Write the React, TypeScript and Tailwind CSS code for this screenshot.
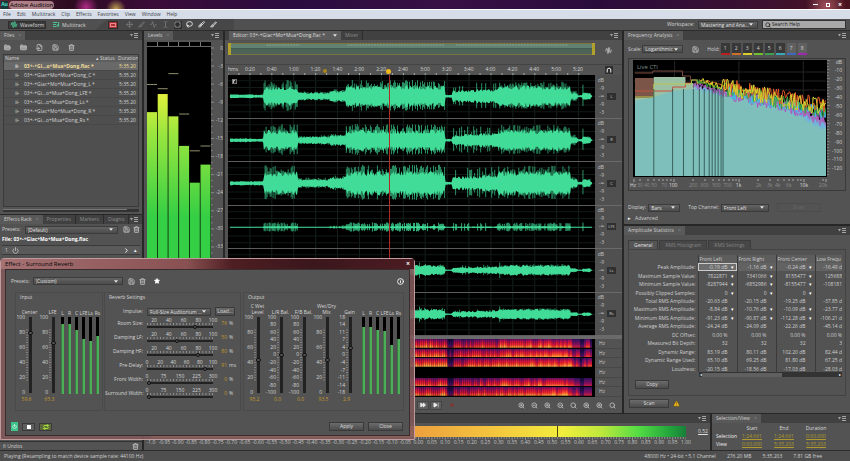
import { useState } from "react";
import type { ReactNode } from "react";
import {
  Activity, AudioWaveform, Brush, ChevronRight, FastForward, FileInput, FolderClosed, FolderOpen,
  Info, Lasso, ListMusic, Move, Power, Repeat, Save, Search, SkipForward, Slice, SquareDashed, Star, TextCursor, Trash2, TriangleAlert, ZoomIn, ZoomOut,
} from "lucide-react";
import type { LucideIcon } from "lucide-react";
import { clsx } from "clsx";

const CHANNELS = ["L", "R", "C", "LFE", "Ls", "Rs"];
const MENUS = ["File", "Edit", "Multitrack", "Clip", "Effects", "Favorites", "View", "Window", "Help"];
const FILES = [
  "03+-+Gi...o+Mua+Dong.flac *",
  "03+-+Giac+Mo+Mua+Dong_C *",
  "03+-+Giac+Mo+Mua+Dong_L *",
  "03+-+Gi...o+Mua+Dong_LFE *",
  "03+-+Gi...o+Mua+Dong_Ls *",
  "03+-+Giac+Mo+Mua+Dong_R *",
  "03+-+Gi...o+Mua+Dong_Rs *",
];
const TIMES = ["0:20", "0:40", "1:00", "1:20", "1:40", "2:00", "2:20", "2:40", "3:00", "3:20", "3:40", "4:00", "4:20", "4:40", "5:00", "5:20"];
const STATS: string[][] = [
  ["Peak Amplitude:", "-0.19 dB", "-1.16 dB", "-0.24 dB", "-16.49 d", "v"],
  ["Maximum Sample Value:", "7822871", "7341066", "8155477", "125688", "v"],
  ["Minimum Sample Value:", "-8287944", "-6852986", "-8155477", "-108181", "v"],
  ["Possibly Clipped Samples:", "0", "0", "0", "", "v"],
  ["Total RMS Amplitude:", "-20.63 dB", "-20.15 dB", "-19.25 dB", "-37.85 d", ""],
  ["Maximum RMS Amplitude:", "-8.84 dB", "-10.76 dB", "-10.09 dB", "-23.77 d", "v"],
  ["Minimum RMS Amplitude:", "-91.23 dB", "-90.87 dB", "-112.28 dB", "-106.21 d", "v"],
  ["Average RMS Amplitude:", "-24.24 dB", "-24.09 dB", "-22.26 dB", "-45.14 d", ""],
  ["DC Offset:", "0.00 %", "0.00 %", "0.00 %", "0.00 %", ""],
  ["Measured Bit Depth:", "32", "32", "32", "3", ""],
  ["Dynamic Range:", "83.19 dB", "80.11 dB", "102.20 dB", "82.44 d", ""],
  ["Dynamic Range Used:", "65.10 dB", "69.25 dB", "81.80 dB", "67.25 d", ""],
  ["Loudness:", "-20.15 dB", "-18.56 dB", "-17.03 dB", "-28.03 d", ""],
];
// Label and place on the 194 units of the frequency axis.
const FREQUENCIES: [string, number][] = [
  ["Hz", 1], ["30", 8], ["40", 15], ["50", 22], ["70", 32], ["100", 41], ["200", 61], ["300", 72], ["500", 84], ["700", 95],
  ["1k", 106], ["2k", 126], ["3k", 137], ["4k", 145], ["6k", 156], ["10k", 171], ["20k", 190],
];

// Repeatable noise, so that every render draws the same signal.
function noise(seed: number) {
  let s = seed * 7919 + 17;
  return () => {
    s = (s * 1103515245 + 12345) % 2147483648;
    return s / 2147483648;
  };
}

// Loudness of the song at x (0..366): [body, peak].
function envelope(x: number): [number, number] {
  if (x < 36) return [1.5, 3];
  if (x < 70) return [8, 16];
  if (x < 102) return [3, 5];
  if (x < 118) return [4.5, 7];
  if (x < 217) return [8.5, 16];
  if (x < 224) return [1, 1.5];
  if (x < 270) return [4.5 + (x - 224) / 25, 14];
  if (x < 342) return [8.5, 15];
  if (x < 349) return [3, 6];
  if (x < 354) return [1, 1.5];
  if (x < 362) return [3, 4];
  return [1, 1];
}

interface TabProps { label: string; active?: boolean; close?: boolean; }

function Tab({ label, active, close }: TabProps) {
  return (
    <button className={clsx("flex h-full items-center gap-1 whitespace-nowrap px-1", active ? "bg-[#595959] text-[#cfcfcf]" : "border-r border-[#2c2c2c] bg-[#404040] text-[#8b8b8b]")}>
      {label}
      {close && <span className="text-[#8d8d8d]">×</span>}
    </button>
  );
}

function TabBar({ children }: { children: ReactNode }) {
  return (
    <div className="flex h-[9px] shrink-0 items-stretch bg-[#414141]">
      {children}
      <button aria-label="Panel menu" className="ml-auto mr-1 flex items-center gap-px text-[#a5a5a5]">
        <svg viewBox="0 0 8 5" className="h-[5px] w-2" fill="currentColor"><path d="M0 1h3L1.500 3.500zM4 0h4v1H4zM4 2h4v1H4zM4 4h4v1H4z" /></svg>
      </button>
    </div>
  );
}

function Caret() {
  return <svg viewBox="0 0 5 3" className="pointer-events-none h-[3px] w-[4px] shrink-0" fill="#e4e4e4"><path d="M0 0h5L2.500 3z" /></svg>;
}

function Dropdown({ label, value, className }: { label: string; value: string; className: string }) {
  return (
    <div className={clsx("flex h-2 items-center border border-[#3b3b3b] bg-gradient-to-b from-[#646464] to-[#4b4b4b] pr-1", className)}>
      <select aria-label={label} className="min-w-0 flex-1 appearance-none truncate bg-transparent pl-[2px] leading-[6px] text-[#e0e0e0] outline-none">
        <option>{value}</option>
      </select>
      <Caret />
    </div>
  );
}

function IconButton({ icon: Icon, label, className }: { icon: LucideIcon; label: string; className?: string }) {
  return (
    <button aria-label={label} title={label} className={clsx("grid h-2 w-2 shrink-0 place-items-center text-[#b9b9b9]", className)}>
      <Icon className="h-[7px] w-[7px]" strokeWidth={3} />
    </button>
  );
}

function PushButton({ children, className }: { children: ReactNode; className?: string }) {
  return (
    <button className={clsx("h-[9px] border border-[#3a3a3a] bg-gradient-to-b from-[#6c6c6c] to-[#4c4c4c] leading-[7px] text-[#dedede]", className)}>{children}</button>
  );
}

// Labels spread so that the middle of each one lies on its mark.
function ScaleX({ labels, className }: { labels: string[]; className?: string }) {
  return (
    <div className={clsx("flex justify-between", className)}>
      {labels.map((l, i) => <span key={i} className="flex w-0 justify-center whitespace-pre">{l}</span>)}
    </div>
  );
}

function ScaleY({ labels, className }: { labels: string[]; className?: string }) {
  return (
    <div className={clsx("flex flex-col justify-between", className)}>
      {labels.map((l, i) => <span key={i} className="flex h-0 items-center justify-end whitespace-nowrap">{l}</span>)}
    </div>
  );
}

function TitleBar() {
  return (
    <header className="flex h-[9px] shrink-0 items-center bg-[radial-gradient(circle_at_86px_7px,#b02a86_0,#b02a8600_12px),radial-gradient(circle_at_116px_9px,#c0a050_0,#a8884400_10px),radial-gradient(circle_at_826px_6px,#a0505a_0,#a0505a00_20px),linear-gradient(90deg,#5a2a38,#2c0a20_8%,#3a0c38_18%,#2a0c40_35%,#381045_52%,#2a0c3c_70%,#3c1030_90%,#48141e)]">
      <span className="ml-px grid h-2 w-[7px] place-items-center bg-[#123c3c] text-[5px] font-bold text-[#5fe0cc]">Au</span>
      <span className="ml-px rounded bg-[#d9a9ae]/70 px-px text-[6px] leading-[8px] text-black">Adobe Audition</span>
      <div className="ml-auto flex items-center gap-2 pr-2 text-white">
        <button aria-label="Minimize" className="h-px w-[5px] bg-white" />
        <button aria-label="Restore" className="h-1 w-1 border border-white" />
        <button aria-label="Close" className="text-[7px] font-bold leading-[8px]">×</button>
      </div>
    </header>
  );
}

function Toolbar() {
  const tools: [LucideIcon, string][] = [[Move, "Move"], [Slice, "Razor"], [Activity, "Slip"], [TextCursor, "Time selection"]];
  const brushes: [LucideIcon, string][] = [[SquareDashed, "Marquee"], [Lasso, "Lasso"], [Brush, "Paintbrush"], [Slice, "Healing"]];
  return (
    <div className="flex h-3 shrink-0 items-center border-b border-[#2c2c2c] bg-[#505050] text-[#d8d8d8]">
      <button className="ml-2 flex h-2 items-center gap-[2px] border border-[#2f2f2f] bg-[#3b3b3b] px-px leading-[6px]">
        <AudioWaveform className="h-[7px] w-2 text-[#4bd39b]" strokeWidth={3} />Waveform
      </button>
      <button className="ml-[5px] flex h-2 items-center gap-[2px] px-px leading-[6px]">
        <ListMusic className="h-[7px] w-2 text-[#4bd39b]" strokeWidth={3} />Multitrack
      </button>
      <div className="ml-[9px] h-full w-3 bg-[#474747] [clip-path:polygon(100%_0,100%_100%,0_100%)]" />
      <div className="flex h-full items-center gap-1 bg-[#474747] pr-4">
        <button aria-label="Spectral display" className="grid h-2 w-[10px] place-items-center border border-[#2b2b2b] bg-[#a8343a]">
          <span className="h-1 w-[6px] border border-[#e88]" />
        </button>
        <div className="ml-1 flex gap-1 opacity-40">{tools.map(([icon, label]) => <IconButton key={label} icon={icon} label={label} />)}</div>
        <div className="flex gap-1">
          {brushes.map(([icon, label], i) => <IconButton key={label} icon={icon} label={label} className={i === 0 ? "bg-[#2e2e2e]" : "text-[#e6e6e6]"} />)}
        </div>
      </div>
      <span className="ml-auto mr-1">Workspace:</span>
      <Dropdown label="Workspace" value="Mastering and Anal..." className="w-[60px]" />
      <div className="ml-1 mr-1 flex h-[9px] w-[84px] items-center border border-[#333] bg-[#a9a9a9] px-px">
        <Search className="h-[6px] w-2 text-[#222]" strokeWidth={3} />
        <input aria-label="Search help" placeholder="Search Help" className="min-w-0 flex-1 bg-transparent leading-[7px] outline-none placeholder:text-[#1d1d1d]" />
      </div>
    </div>
  );
}

function FilesPanel() {
  const [selected, setSelected] = useState(0);
  return (
    <section className="flex h-[183px] shrink-0 flex-col bg-[#535353]">
      <TabBar><Tab label="Files" active close /></TabBar>
      <div className="flex h-[14px] items-center gap-1 px-[3px]">
        <IconButton icon={FolderOpen} label="Open file" className="[&_svg]:fill-[#999]" />
        <IconButton icon={FolderClosed} label="Import" className="ml-1 [&_svg]:fill-[#999]" />
        <IconButton icon={FileInput} label="New file" className="ml-1" />
        <IconButton icon={Save} label="Insert into multitrack" className="ml-1" />
        <IconButton icon={Trash2} label="Close file" className="ml-1" />
      </div>
      <div className="mx-[3px] flex-1 overflow-hidden border border-[#3a3a3a] bg-[#4f4f4f]">
        <table className="w-full table-fixed border-collapse text-left text-[#d2d2d2]">
          <colgroup><col /><col className="w-[18px]" /><col className="w-[20px]" /></colgroup>
          <thead>
            <tr className="h-[7px] bg-[#5e5e5e] leading-[7px]">
              <th className="p-0 pl-px font-normal">Name<span className="float-right mr-px">▴</span></th>
              <th className="p-0 font-normal">Status</th>
              <th className="p-0 font-normal">Duration</th>
            </tr>
          </thead>
          <tbody>
            {FILES.map((f, i) => (
              <tr key={f} onClick={() => setSelected(i)} className={clsx("h-[8px] border-b border-[#484848] leading-[8px]", i === selected ? "bg-[#696969] font-bold text-[#f0dc98]" : "font-medium")}>
                <td className="whitespace-nowrap p-0 pl-[11px]"><span className="inline-block w-[9px] text-[#c8c8c8]">⊪</span>{f}</td>
                <td className="p-0" />
                <td className="overflow-hidden whitespace-nowrap p-0 pl-px font-medium">5:35.20</td>
              </tr>
            ))}
          </tbody>
        </table>
      </div>
      <div className="mx-[3px] my-[2px] h-[3px] bg-[#333]"><div className="h-px w-[124px] bg-[#777]" /></div>
    </section>
  );
}

function EffectsRack() {
  return (
    <section className="flex min-h-0 flex-1 flex-col bg-[#535353]">
      <TabBar>
        <Tab label="Effects Rack" active close />
        <Tab label="Properties" /><Tab label="Markers" /><Tab label="Diagno" />
      </TabBar>
      <div className="flex h-[11px] items-center px-[2px] text-[#d6d6d6]">
        <span>Presets:</span>
        <Dropdown label="Rack preset" value="(Default)" className="ml-1 w-[94px]" />
        <IconButton icon={Save} label="Save preset" className="ml-1" />
        <IconButton icon={Trash2} label="Delete preset" className="ml-[2px]" />
      </div>
      <div className="h-[10px] truncate px-[2px] font-bold leading-[8px] text-white">File: 03+-+Giac+Mo+Mua+Dong.flac</div>
      <div className="mx-[2px] flex h-[10px] items-center gap-1 border-y border-[#3a3a3a] bg-[#5a5a5a] px-[3px]">
        <span>1</span>
        <IconButton icon={Power} label="Toggle effect 1" />
        <IconButton icon={ChevronRight} label="Choose effect" className="ml-auto text-white" />
        <span className="text-white">▴</span>
      </div>
      <div className="mt-auto flex h-[9px] items-center justify-between border-t border-[#333] px-[3px]">
        <span>6 Undos</span>
        <IconButton icon={Trash2} label="Clear history" />
      </div>
    </section>
  );
}

function LevelsPanel() {
  // top of each bar and of its held peak, in dB below full scale
  const bars = [[10.8, 6.300], [7.800, 7], [11.5, 4.500], [16.400, 11.200], [22.500, 17.300], [19.500, 16.500]];
  const db = Array.from({ length: 13 }, (_, i) => String(-3 * i));
  return (
    <section className="flex w-[79px] shrink-0 flex-col bg-[#535353]">
      <TabBar><Tab label="Levels" active close /></TabBar>
      <div className="flex min-h-0 flex-1 overflow-hidden pl-[3px] pt-[2px]">
        <div className="flex w-16 flex-col bg-black">
          <div className="flex h-[5px] divide-x divide-[#777] border-b border-[#666]">{CHANNELS.map((c) => <div key={c} className="flex-1" />)}</div>
          <svg viewBox="0 0 64 366" className="h-[366px] w-16 shrink-0">
            <defs>
              <linearGradient id="lvl" gradientUnits="userSpaceOnUse" x1="0" y1="40" x2="0" y2="170">
                <stop offset="0" stopColor="#eef23c" /><stop offset=".35" stopColor="#9be63e" /><stop offset="1" stopColor="#35cf45" />
              </linearGradient>
            </defs>
            {bars.map(([top, peak], i) => (
              <g key={i}>
                <rect x={i * 10.7} y={top * 6.030} width="10" height="366" fill="url(#lvl)" />
                <rect x={i * 10.7} y={peak * 6.030 - 1} width="10" height="1" fill="#8f8f6c" />
              </g>
            ))}
          </svg>
        </div>
        <svg viewBox="0 0 3 366" className="h-[366px] w-[3px] shrink-0"><path d={Array.from({ length: 60 }, (_, i) => `M0 ${6 + i * 6.030}H${i % 3 ? 1.5 : 3}`).join("")} stroke="#999" strokeWidth=".8" /></svg>
        <ScaleY labels={db} className="mt-[6px] h-[217px] w-[9px] text-[#c8c8c8]" />
      </div>
    </section>
  );
}

function Waveform({ index }: { index: number }) {
  const rnd = noise(index + 3);
  const gain = [1, 1, 1.15, 0.4, 0.5, 0.5][index];
  const lfe = index === 3;
  const top: string[] = [];
  const bottom: string[] = [];
  const spikes: string[] = [];
  for (let x = 2; x < 364; x += 1) {
    const [body, peak] = envelope(x);
    const b = Math.max(0.5, body * (lfe ? 0.12 : gain) * (0.75 + rnd() * 0.6));
    top.push(`${x},${(22 - b).toFixed(1)}`);
    bottom.unshift(`${x},${(22 + b).toFixed(1)}`);
    const chance = x >= 224 && x < 270 ? 0.2 : 0.7;
    if (rnd() < chance && x > 34 && (!lfe || peak > 6)) {
      const p = peak * gain * (0.6 + rnd() * 0.45) * (lfe ? 0.75 : index > 3 ? 0.8 : 1);
      spikes.push(`M${x} ${(22 - p).toFixed(1)}V${(22 + p * 0.9).toFixed(1)}`);
    }
  }
  if (index < 4) spikes.push(`M325 ${22 - 12 * gain}V${22 + 10 * gain}M354 ${22 - 12 * gain}V${22 + 10 * gain}`);
  if (index > 3) spikes.push("M191 14V30M271 14V30");
  return (
    <svg viewBox="0 0 366 44" preserveAspectRatio="none" className="min-h-0 w-full flex-1 border-b border-[#5c5c5c] bg-black">
      <path d={TIMES.map((_, i) => `M${(i + 1) * 21.850} 0V44`).join("")} stroke="#14201c" strokeWidth="1" />
      <path d="M0 6H366M0 13H366M0 22H366M0 31H366M0 38H366" stroke="#101a16" strokeWidth="1" />
      <path d={spikes.join("")} stroke="#40d996" strokeWidth=".9" opacity={lfe ? 0.9 : 0.75} />
      <polygon points={[...top, ...bottom].join(" ")} fill="#41dc98" />
    </svg>
  );
}

function Spectrogram({ index }: { index: number }) {
  const rnd = noise(index + 40);
  const gain = index === 1 || index === 2 ? 1 : 0.75;
  const cols = Array.from({ length: 181 }, (_, i) => {
    const [body] = envelope(i * 2);
    const v = body * gain * (0.55 + rnd() * 0.8);
    return { x: i * 2 + 1, kind: v > 8 ? "peak" : v > 5.200 ? "hot" : v > 2.800 ? "warm" : v > 1.300 ? "cool" : "dark" };
  });
  return (
    <svg viewBox="0 0 366 9" preserveAspectRatio="none" className="min-h-0 w-full flex-1 border-b border-black bg-black">
      {index !== 3 && cols.map((c) => <rect key={c.x} x={c.x} y="0" width="2" height="9" fill={`url(#${c.kind})`} />)}
    </svg>
  );
}

function SpectrumGradients() {
  const ramps: [string, string[]][] = [
    ["peak", ["#7c1264", "#e0183c", "#ff5a28", "#ffc850"]],
    ["hot", ["#641068", "#cc1040", "#f02a2c", "#ffa040"]],
    ["warm", ["#4a1068", "#980e54", "#d01438", "#f85a2c"]],
    ["cool", ["#2c105c", "#5c1060", "#8c1058", "#d02840"]],
    ["dark", ["#140a30", "#200c4a", "#3a1058", "#701050"]],
  ];
  return (
    <svg className="absolute h-0 w-0" aria-hidden="true">
      <defs>
        {ramps.map(([id, stops]) => (
          <linearGradient key={id} id={id} x1="0" y1="0" x2="0" y2="1">
            {stops.map((s, i) => <stop key={i} offset={i / 3} stopColor={s} />)}
          </linearGradient>
        ))}
      </defs>
    </svg>
  );
}

function EditorPanel() {
  const zooms: [LucideIcon, string][] = [
    [ZoomIn, "Zoom in"], [ZoomOut, "Zoom out"], [ZoomIn, "Zoom in vertically"], [ZoomOut, "Zoom out vertically"],
    [Search, "Zoom full"], [ZoomIn, "Zoom to in point"], [ZoomIn, "Zoom to out point"], [Search, "Zoom to selection"],
  ];
  return (
    <section className="flex min-w-0 flex-1 flex-col bg-[#535353]">
      <TabBar>
        <div className="w-1" />
        <button className="flex items-center gap-2 bg-[#5c5c5c] px-1 text-[#dcdcdc]">Editor: 03+-+Giac+Mo+Mua+Dong.flac *<Caret /></button>
        <Tab label="Mixer" />
      </TabBar>
      <div className="flex h-6 items-start pl-[3px] pt-[3px]">
        <div className="flex h-3 min-w-0 flex-1 border-x-[3px] border-[#b3a02c] bg-[#4d6358]">
          <svg viewBox="0 0 366 12" preserveAspectRatio="none" className="h-full w-full">
            <rect width="366" height="5" fill="#638171" />
            <path d="M36 2H70M118 2H217M228 2H342" stroke="#83a694" strokeDasharray="2 1" />
            <path d="M0 5.500H366" stroke="#455a50" />
            <path d="M0 .5H366M0 11.500H366" stroke="#7a7440" />
          </svg>
        </div>
        <div className="flex w-[27px] justify-center pt-[3px]"><IconButton icon={AudioWaveform} label="Zoom navigator" /></div>
      </div>
      <div className="flex h-[11px] items-center border-t border-[#444] pl-[3px]">
        <div className="relative flex h-full min-w-0 flex-1 flex-col justify-between text-[#d5d5d5]">
          <ScaleX labels={["\u2003\u2003hms", ...TIMES, ""]} className="-mr-[5px] leading-[8px]" />
          <svg viewBox="0 0 366 2" preserveAspectRatio="none" className="h-[2px] w-full">
            <path d={Array.from({ length: 33 }, (_, i) => `M${i * 10.930} 0V2`).join("")} stroke="#aaa" />
          </svg>
          <span className="absolute left-[26%] top-1 h-1 w-1 rounded-full bg-[#a8861a]" />
          <span className="absolute left-[43%] top-1 h-[5px] w-[5px] rounded-full bg-[#f0b81c]" />
        </div>
        <div className="flex w-[27px] justify-center">
          <button aria-label="Snapping" className="grid h-2 w-2 place-items-center bg-[#2f2f2f]">
            <svg viewBox="0 0 6 6" className="h-[6px] w-[6px]" fill="none" stroke="#f2f2f2"><path d="M1.200 5.500V3a1.800 1.800 0 0 1 3.600 0v2.500" /></svg>
          </button>
        </div>
      </div>
      <div className="flex min-h-0 flex-1 pl-[3px]">
        <div className="relative flex min-w-0 flex-1 flex-col bg-black">
          {CHANNELS.map((c, i) => <Waveform key={c} index={i} />)}
          <div className="absolute inset-y-0 left-[44%] w-px bg-[#b02a2a]" />
          <span className="absolute left-1 top-1 h-[5px] w-[5px] border border-[#777] bg-[linear-gradient(135deg,#bbb_50%,#222_50%)]" />
        </div>
        <div className="flex w-[27px] flex-col">
          {CHANNELS.map((c) => (
            <div key={c} className="flex flex-1 items-center border-b border-[#6a6a6a] bg-[#505050]">
              <ScaleY labels={["dB", "-9", "-∞", "-9", "-3"]} className="h-8 w-[9px] text-[#c4c4c4]" />
              <button className="ml-[3px] h-[7px] w-[9px] bg-[#303030] text-[4px] leading-[7px] text-[#ccc]">{c}</button>
            </div>
          ))}
        </div>
      </div>
      <div className="h-[3px] bg-[#6a6a6a]" />
      <div className="flex h-[58px] pl-[3px]">
        <SpectrumGradients />
        <div className="flex min-w-0 flex-1 flex-col">{CHANNELS.map((c, i) => <Spectrogram key={c} index={i} />)}</div>
        <div className="flex w-[27px] flex-col">
          {CHANNELS.map((c) => <span key={c} className="flex flex-1 items-center border-b border-[#474747] pl-1 text-[#c8c8c8]">Hz</span>)}
        </div>
      </div>
      <div className="flex h-4 items-center pr-[6px]">
        <div className="w-[49%] shrink-0" />
        <button aria-label="Fast forward" className="mr-px grid h-[9px] w-3 place-items-center border border-[#444] bg-[#5e5e5e]"><FastForward className="h-[6px] w-2 fill-[#eee] text-[#eee]" /></button>
        <button aria-label="Skip to end" className="grid h-[9px] w-3 place-items-center border border-[#444] bg-[#5e5e5e]"><SkipForward className="h-[6px] w-2 fill-[#eee] text-[#eee]" /></button>
        <button aria-label="Record" className="ml-2 mr-auto h-1 w-1 rounded-full bg-[#7a3a3a]" />
        <div className="flex gap-[5px]">{zooms.map(([icon, label]) => <IconButton key={label} icon={icon} label={label} />)}</div>
      </div>
    </section>
  );
}

function FrequencyPlot() {
  const rnd = noise(9);
  // falling curve shared by all the traces
  const base = (x: number) => (x < 90 ? 19 + Math.max(0, x - 66) * 0.25 : 25 + (x - 90) * 0.2);
  const trace = (off: number, jump: number, from = 60) => {
    const p: string[] = [];
    for (let x = from; x <= 194; x += 1) {
      const amp = x < 90 ? jump * 0.35 : jump;
      p.push(`${x},${Math.max(12, base(x) + off * Math.min(1, x / 120) + (rnd() - 0.5) * amp).toFixed(1)}`);
    }
    return p.join(" ");
  };
  const edge = (from: number, start: number, slope: number, jump: number) => {
    const p: string[] = [];
    for (let x = from; x <= 194; x += 1) p.push(`${x},${(start + (x - from) * slope + (x > 150 ? (x - 150) * 0.3 : 0) + (rnd() - 0.5) * jump).toFixed(1)}`);
    return p.join(" ");
  };
  const lines = [20, 39, 50, 60, 66, 71, 76, 79, 82, 85, 88, 90];
  return (
    <svg viewBox="0 0 194 115" preserveAspectRatio="none" className="h-[115px] w-full bg-black">
      <path d="M41 0V115M106 0V115M171 0V115M0 11H194M0 20H194M0 29H194M0 38H194" stroke="#242424" />
      <rect x="1" y="17" width="19" height="20" fill="#7a5548" />
      <path d="M1 115V37H20V16H52V22H60V27H66V30L90 36V115Z" fill="#9cc0a4" />
      <polygon points={`60,115 ${edge(60, 24, 0.16, 8)} 194,115`} fill="#a070c0" />
      <polygon points={`60,115 ${edge(60, 27, 0.19, 8)} 194,115`} fill="#6fb4dc" />
      <polygon points={`1,115 1,40 20,36 39,30 60,28 ${edge(61, 28, 0.21, 5)} 194,115`} fill="#7fbfbb" />
      <polyline points="1,12 19,12 19,10 49,10 49,15 57,15 57,19 63,19 63,23 70,19" fill="none" stroke="#7a4c40" />
      <polyline points="1,30 39,30 39,26 52,26 52,22 58,22" fill="none" stroke="#c8503c" />
      <polyline points="1,36 20,36 20,23 58,23 58,19 64,19 64,22 72,22" fill="none" stroke="#b8c850" />
      <polyline points={trace(9, 12, 66)} fill="none" stroke="#b055b8" />
      <polyline points={trace(6, 14, 95)} fill="none" stroke="#40b8e0" />
      <polyline points={trace(4, 15, 64)} fill="none" stroke="#35a838" />
      <polyline points={trace(-1, 15, 72)} fill="none" stroke="#e05a28" />
      <polyline points={trace(1, 17, 66)} fill="none" stroke="#d8d030" />
      <path d={lines.map((x) => `M${x} 28V115`).join("")} stroke="#2f5350" strokeWidth=".9" />
      <text x="3" y="8" fontSize="6" fill="#7b8f88">Live CTI</text>
    </svg>
  );
}

function FrequencyPanel() {
  const holds: [string, string][] = [
    ["1", "border-[#b82020]"], ["2", "border-[#d07028]"], ["3", "border-[#d8d028]"], ["4", "border-[#70c030]"],
    ["5", "border-[#3f9f50]"], ["6", "border-[#38a8b8]"], ["7", "border-[#3c68c0]"], ["8", "border-[#a028b0]"],
  ];
  return (
    <section className="flex h-[193px] shrink-0 flex-col bg-[#535353] text-[#d2d2d2]">
      <TabBar><Tab label="Frequency Analysis" active close /></TabBar>
      <div className="flex h-[18px] items-center px-1">
        <span>Scale:</span>
        <Dropdown label="Scale" value="Logarithmic" className="ml-px w-[41px]" />
        <IconButton icon={Save} label="Copy scan" className="ml-2" />
        <span className="ml-2 mr-px">Hold:</span>
        <div className="flex gap-[2px]">
          {holds.map(([n, color]) => <button key={n} className={clsx("h-3 w-[9px] border-b-2 leading-[8px]", color, Number(n) < 7 ? "bg-[#383838]" : "bg-[#606060]")}>{n}</button>)}
        </div>
      </div>
      <div className="mx-1 flex flex-col border border-[#3a3a3a] pb-px pl-1 pt-px">
        <div className="flex">
          <div className="min-w-0 flex-1 border border-black"><FrequencyPlot /></div>
          <svg viewBox="0 0 3 115" className="h-[115px] w-[3px]"><path d={Array.from({ length: 40 }, (_, i) => `M0 ${i * 3 + 0.5}H${i % 3 ? 2 : 3}`).join("")} stroke="#999" strokeWidth=".6" /></svg>
          <ScaleY labels={["dB", "-10", "-20", "-30", "-40", "-50", "-60", "-70", "-80", "-90", "-100", "-110", "-120"]} className="mr-[3px] h-[109px] w-3 pt-[2px]" />
        </div>
        <div className="mr-[18px] flex flex-col pt-[2px]">
          <svg viewBox="0 0 194 3" preserveAspectRatio="none" className="h-[3px] w-full">
            <path d="M1 0V3M7 0V2M15 0V2M21 0V2M26 0V2M30 0V2M34 0V2M38 0V2M41 0V3M60 0V2M72 0V2M80 0V2M86 0V2M91 0V2M96 0V2M100 0V2M103 0V2M106 0V3M125 0V2M137 0V2M145 0V2M151 0V2M156 0V2M160 0V2M165 0V2M168 0V2M171 0V3M190 0V2M193 0V3" stroke="#aaa" />
          </svg>
          <div className="flex text-[#8c8c8c]">
            {FREQUENCIES.map(([l, at], i) => (
              <span key={l} className="flex basis-0" style={{ flexGrow: (FREQUENCIES[i + 1]?.[1] ?? 194) - at }}>
                <span className={clsx("flex w-0 justify-center", ["Hz", "100", "1k", "10k"].includes(l) && "text-[#dedede]")}>{l}</span>
              </span>
            ))}
          </div>
        </div>
      </div>
      <div className="mt-3 flex items-center px-1">
        <span>Display:</span>
        <Dropdown label="Display" value="Bars" className="ml-[2px] w-8" />
        <span className="ml-2 mr-[2px]">Top Channel:</span>
        <Dropdown label="Top channel" value="Front Left" className="w-12" />
        <button disabled className="ml-2 h-[9px] w-11 border border-[#4c4c4c] leading-[7px] text-[#6a6a6a]">Scan</button>
      </div>
      <button className="mt-[3px] flex items-center gap-1 px-1"><span className="text-white">▸</span>Advanced</button>
    </section>
  );
}

function AmplitudePanel() {
  return (
    <section className="flex min-h-0 flex-1 flex-col bg-[#535353] text-[#cfcfcf]">
      <TabBar><Tab label="Amplitude Statistics" active close /></TabBar>
      <div className="mt-[5px] flex h-[9px] px-1">
        {["General", "RMS Histogram", "RMS Settings"].map((t, i) => (
          <button key={t} className={clsx("border border-b-0 border-[#3c3c3c] px-[5px] leading-[8px]", i ? "ml-px bg-[#474747] text-[#858585]" : "bg-[#555] text-[#e6e6e6]")}>{t}</button>
        ))}
      </div>
      <div className="mx-1 border border-[#434343] p-1 pr-[3px] pt-[5px]">
        <div className="h-[117px] overflow-hidden">
          <table className="h-[118px] w-full table-fixed border-collapse text-right">
            <colgroup><col className="w-[65px]" /><col className="w-[39px]" /><col className="w-[39px]" /><col className="w-[39px]" /><col /></colgroup>
            <thead>
              <tr className="text-left leading-[8px]">
                <th />
                {["Front Left", "Front Right", "Front Center", "Low Frequ"].map((h) => <th key={h} className="overflow-hidden whitespace-nowrap border-l border-[#3a3a3a] bg-[#5d5d5d] p-0 pl-px font-normal">{h}</th>)}
              </tr>
            </thead>
            <tbody>
              {STATS.map(([name, a, b, c, d, menu], row) => (
                <tr key={name} className="leading-[8px]">
                  <th className="whitespace-nowrap p-0 pr-[2px] font-normal">{name}</th>
                  {[a, b, c, d].map((v, i) => (
                    <td key={i} className={clsx("overflow-hidden whitespace-nowrap border-l border-[#3a3a3a] p-0", row === 0 && (i === 0 ? "bg-[#6d6d6d] outline outline-1 -outline-offset-1 outline-[#ccc]" : "bg-[#626262]"))}>
                      {v}
                      {i < 3 && <span className="inline-block w-[9px] text-center text-white">{menu && "▾"}</span>}
                    </td>
                  ))}
                </tr>
              ))}
            </tbody>
          </table>
        </div>
        <div className="ml-[66px] flex h-[5px] items-center justify-between bg-[#333] px-px text-[4px] leading-[5px] text-white">
          <span>◂</span><div className="mr-auto h-1 w-20 bg-[#606060]" /><span>▸</span>
        </div>
        <PushButton className="ml-[2px] mt-[3px] w-[34px]">Copy</PushButton>
        <div className="h-[2px]" />
      </div>
      <div className="mt-[3px] flex items-center gap-1 px-[5px]">
        <PushButton className="w-10">Scan</PushButton>
        <TriangleAlert className="h-[7px] w-[7px] fill-[#f0bc20] text-[#6a5010]" />
      </div>
    </section>
  );
}

function MasterMeter() {
  const labels = Array.from({ length: 41 }, (_, i) => (i === 0 ? "-1.0" : ((i - 20) / 20).toFixed(2)));
  return (
    <section className="min-w-0 flex-1 bg-[#535353]">
      <TabBar><span /></TabBar>
      <div className="mt-[3px] flex items-center pl-[7px]">
        <div className="flex h-[11px] min-w-0 flex-1 bg-[linear-gradient(90deg,#e8963c,#eda23e_50%,#f4c83e_65%,#f2ee3c_77%,#c0e83c_84%,#55dd44_91%,#22a43c_97%,#188038)]">
          <div className="h-full w-[76%] border-r border-[#4d4510]" />
        </div>
        <span className="w-6 pl-[12px] text-[#ddd] underline">0.52</span>
      </div>
      <div className="ml-[7px] mr-6">
        <svg viewBox="0 0 536 3" preserveAspectRatio="none" className="h-[3px] w-full"><path d={Array.from({ length: 201 }, (_, i) => `M${i * 2.680} 0V${i % 5 ? 2 : 3}`).join("")} stroke="#aaa" strokeWidth=".7" /></svg>
        <ScaleX labels={labels} className="leading-[5px] text-[#c4c4c4]" />
      </div>
    </section>
  );
}

function SelectionView() {
  const rows = [["Selection", "1:24.661", "1:24.661", "0:00.000"], ["View", "0:00.000", "5:35.203", "5:35.203"]];
  return (
    <section className="w-[138px] shrink-0 bg-[#535353]">
      <TabBar><Tab label="Selection/View" active close /></TabBar>
      <table className="ml-1 mt-px w-[116px] table-fixed border-collapse text-left">
        <colgroup><col className="w-[20px]" /><col /><col /><col /></colgroup>
        <thead><tr className="leading-[8px]"><th />{["Start", "End", "Duration"].map((h) => <th key={h} className="p-0 text-center font-normal text-[#ddd]">{h}</th>)}</tr></thead>
        <tbody>
          {rows.map(([name, ...vals]) => (
            <tr key={name} className="leading-[8px]">
              <th className="whitespace-nowrap p-0 font-normal text-[#eee]">{name}</th>
              {vals.map((v, i) => <td key={i} className="p-0 text-center text-[#b09a2c] underline">{v}</td>)}
            </tr>
          ))}
        </tbody>
      </table>
    </section>
  );
}

interface FaderProps { label: string; scale: string[]; value: number; reading: string; }

function Fader({ label, scale, value, reading }: FaderProps) {
  return (
    <label className="flex w-[23px] flex-col items-center">
      <span className="flex h-[14px] items-end whitespace-pre text-center leading-[6px]">{label}</span>
      <span className="mt-[2px] flex h-[76px] w-full">
        <ScaleY labels={scale} className="w-[7px]" />
        <svg viewBox="0 0 3 76" className="ml-px h-full w-[2px]"><path d={Array.from({ length: 21 }, (_, i) => `M0 ${i * 3.750 + 0.5}H3`).join("")} stroke="#aaa" strokeWidth=".8" /></svg>
        <input
          type="range"
          defaultValue={value}
          className="h-[76px] w-[5px] appearance-none bg-[linear-gradient(90deg,transparent_1px,#222_1px,#222_4px,transparent_4px)] [direction:rtl] [writing-mode:vertical-lr] [&::-webkit-slider-thumb]:h-[4px] [&::-webkit-slider-thumb]:w-[5px] [&::-webkit-slider-thumb]:appearance-none [&::-webkit-slider-thumb]:rounded-full [&::-webkit-slider-thumb]:border [&::-webkit-slider-thumb]:border-[#111] [&::-webkit-slider-thumb]:bg-[#555]"
        />
      </span>
      <span className="mt-[3px] pr-[6px] leading-[6px] text-[#c49a2a]">{reading}</span>
    </label>
  );
}

function MeterStrip({ levels, className }: { levels: number[]; className: string }) {
  return (
    <div className={clsx("flex pt-[9px]", className)}>
      {levels.map((v, i) => (
        <div key={i} className="flex w-[7px] flex-col items-center">
          <span className="flex w-0 justify-center leading-[6px]">{CHANNELS[i]}</span>
          <div className="mt-px flex h-[77px] w-[3px] flex-col justify-end bg-black">
            <div className="border-l border-[#3c7a44] bg-[#4caf58]" style={{ height: `${v}%` }} />
          </div>
        </div>
      ))}
    </div>
  );
}

interface KnobRowProps { label: string; scale: string[]; value: number; reading: string; unit: string; }

function KnobRow({ label, scale, value, reading, unit }: KnobRowProps) {
  return (
    <label className="flex h-[14px] items-center">
      <span className="w-[38px] shrink-0 whitespace-nowrap text-right">{label}</span>
      <span className="ml-1 flex w-[66px] shrink-0 flex-col">
        <ScaleX labels={scale} className={clsx("leading-[6px]", scale[0] !== "0" && "pl-[7px]")} />
        <svg viewBox="0 0 66 2" className="h-[2px] w-full"><path d={Array.from({ length: 21 }, (_, i) => `M${i * 3.250 + 0.5} 0V2`).join("")} stroke="#aaa" strokeWidth=".7" /></svg>
        <input
          type="range"
          defaultValue={value}
          className="h-[4px] w-full appearance-none bg-[linear-gradient(180deg,transparent_1px,#222_1px,#222_3px,transparent_3px)] [&::-webkit-slider-thumb]:h-[4px] [&::-webkit-slider-thumb]:w-[4px] [&::-webkit-slider-thumb]:appearance-none [&::-webkit-slider-thumb]:rounded-full [&::-webkit-slider-thumb]:border [&::-webkit-slider-thumb]:border-[#111] [&::-webkit-slider-thumb]:bg-[#555]"
        />
      </span>
      <span className="w-[14px] text-right text-[#c49a2a]">{reading}</span>
      <span className="ml-[2px]">{unit}</span>
    </label>
  );
}

function Group({ title, children, className }: { title: string; children: ReactNode; className?: string }) {
  return (
    <section className={clsx("h-[119px] border border-[#4a4a4a]", className)}>
      <h3 className="pl-1 leading-[8px]">{title}</h3>
      {children}
    </section>
  );
}

function ReverbDialog() {
  const pct = ["100", "80", "60", "40", "20", "0"];
  const bal = ["100", "80", "60", "40", "20", "0", "-20", "-40", "-60", "-80", "-100"];
  const gain = ["18", "14", "11", "7", "4", "0", "-4", "-7", "-11", "-14", "-18"];
  return (
    <div role="dialog" aria-label="Effect - Surround Reverb" className="absolute left-0 top-[258px] flex w-[415px] flex-col rounded-t-sm border border-[#c09a9c] bg-[#82595b]/90 px-1 pb-[3px] text-[#d6d6d6]">
      <div className="-mx-1 flex h-[10px] items-center bg-[linear-gradient(90deg,#a87476,#8a5052_45%,#4c1c20_56%,#38141a_75%,#4a1a20)] pl-1 pr-1 opacity-95">
        <span className="text-[6px] leading-[8px] text-black">Effect - Surround Reverb</span>
        <button aria-label="Close dialog" className="ml-auto text-[7px] font-bold leading-[8px] text-white">×</button>
      </div>
      <div className="flex flex-col border border-[#3a2c2c] bg-[#535353] px-[5px] pb-[4px]">
        <div className="flex h-[22px] items-center">
          <span>Presets:</span>
          <Dropdown label="Preset" value="(Custom)" className="ml-[3px] w-[90px]" />
          <IconButton icon={Save} label="Save preset" className="ml-[5px]" />
          <IconButton icon={Trash2} label="Delete preset" className="ml-[3px]" />
          <IconButton icon={Star} label="Favorite" className="ml-[6px] text-white [&_svg]:h-[6px] [&_svg]:w-[6px] [&_svg]:fill-white" />
          <IconButton icon={Info} label="Info" className="ml-auto text-white" />
        </div>
        <div className="flex pl-1">
          <Group title="Input" className="w-[88px]">
            <div className="flex pl-[2px]">
              <Fader label="Center" scale={pct} value={80} reading="59.6" />
              <Fader label="LFE" scale={pct} value={66} reading="65.3" />
              <MeterStrip levels={[91, 91, 83, 71, 69, 75]} className="-ml-[5px]" />
            </div>
          </Group>
          <Group title="Reverb Settings" className="ml-px w-[137px]">
            <div className="mt-[6px] flex h-[9px] items-center">
              <span className="w-[38px] shrink-0 text-right">Impulse:</span>
              <Dropdown label="Impulse" value="Full-Size Auditorium - so..." className="ml-1 w-[64px]" />
              <PushButton className="ml-1 w-5">Load...</PushButton>
            </div>
            <KnobRow label="Room Size:" scale={["20", "40", "60", "80", "100"]} value={74} reading="76" unit="%" />
            <KnobRow label="Damping LF:" scale={["20", "40", "60", "80", "100"]} value={45} reading="50" unit="%" />
            <KnobRow label="Damping HF:" scale={["20", "40", "60", "80", "100"]} value={79} reading="80" unit="%" />
            <KnobRow label="Pre-Delay:" scale={["0", "20", "40", "60", "80", "100"]} value={91} reading="91" unit="ms" />
            <KnobRow label="Front Width:" scale={["0", "75", "150", "225", "300"]} value={0} reading="0" unit="%" />
            <KnobRow label="Surround Width:" scale={["0", "75", "150", "225", "300"]} value={0} reading="0" unit="%" />
          </Group>
          <Group title="Output" className="ml-[2px] flex-1">
            <div className="flex pl-[2px]">
              <Fader label={"C Wet\nLevel"} scale={pct} value={43} reading="95.2" />
              <Fader label="L/R Bal." scale={bal} value={50} reading="0.0" />
              <Fader label="F/B Bal." scale={bal} value={50} reading="0.0" />
              <Fader label={"Wet/Dry\nMix"} scale={pct} value={43} reading="93.5" />
              <Fader label="Gain" scale={gain} value={60} reading="2.9" />
              <MeterStrip levels={[87, 87, 83, 82, 64, 72]} className="-ml-px" />
            </div>
          </Group>
        </div>
        <div className="mt-[11px] flex items-center gap-1 pr-px">
          <button aria-label="Power" className="grid h-[9px] w-[7px] place-items-center bg-[#3cc48a]"><Power className="h-[5px] w-[5px] text-white" strokeWidth={3} /></button>
          <button aria-label="Stop" className="grid h-2 w-[13px] place-items-center border border-[#3a3a3a] bg-[#5e5e5e]"><span className="h-[4px] w-[4px] bg-white" /></button>
          <button aria-label="Loop" className="grid h-2 w-[13px] place-items-center border border-[#3a3a3a] bg-[#5e6a3c]"><Repeat className="h-[6px] w-[6px] text-[#a5e03c]" strokeWidth={4} /></button>
          <PushButton className="ml-auto w-[35px]">Apply</PushButton>
          <PushButton className="w-[35px]">Close</PushButton>
        </div>
      </div>
    </div>
  );
}

export default function App() {
  return (
    <div className="relative flex h-screen min-h-[461px] w-full flex-col overflow-hidden bg-[#272727] font-['Open_Sans','Liberation_Sans',sans-serif] text-[5px] leading-[7px] text-[#d0d0d0]">
      <TitleBar />
      <nav className="flex h-[10px] shrink-0 items-center gap-[6px] border-t border-white bg-[#d6dde8] px-[3px] text-[#3c3c44]">
        {MENUS.map((m) => <button key={m}>{m}</button>)}
      </nav>
      <Toolbar />
      <main className="flex min-h-0 flex-1 gap-[2px]">
        <div className="flex w-[142px] shrink-0 flex-col gap-px"><FilesPanel /><EffectsRack /></div>
        <div className="flex min-w-0 flex-1 flex-col gap-px">
          <div className="flex min-h-0 flex-1 gap-[2px]">
            <LevelsPanel />
            <EditorPanel />
            <div className="flex w-[226px] shrink-0 flex-col gap-[2px]"><FrequencyPanel /><AmplitudePanel /></div>
          </div>
          <div className="flex h-9 shrink-0 gap-[2px]"><MasterMeter /><SelectionView /></div>
        </div>
      </main>
      <footer className="flex h-[11px] shrink-0 items-center gap-[11px] border-t border-[#2c2c2c] bg-[#4f4f4f] pl-1 pr-7">
        <span className="mr-auto">Playing (Resampling to match device sample rate: 44100 Hz)</span>
        <span>48000 Hz • 24-bit • 5.1 Channel</span>
        <span>276.20 MB</span>
        <span>5:35.203</span>
        <span>7.81 GB free</span>
      </footer>
      <ReverbDialog />
    </div>
  );
}
